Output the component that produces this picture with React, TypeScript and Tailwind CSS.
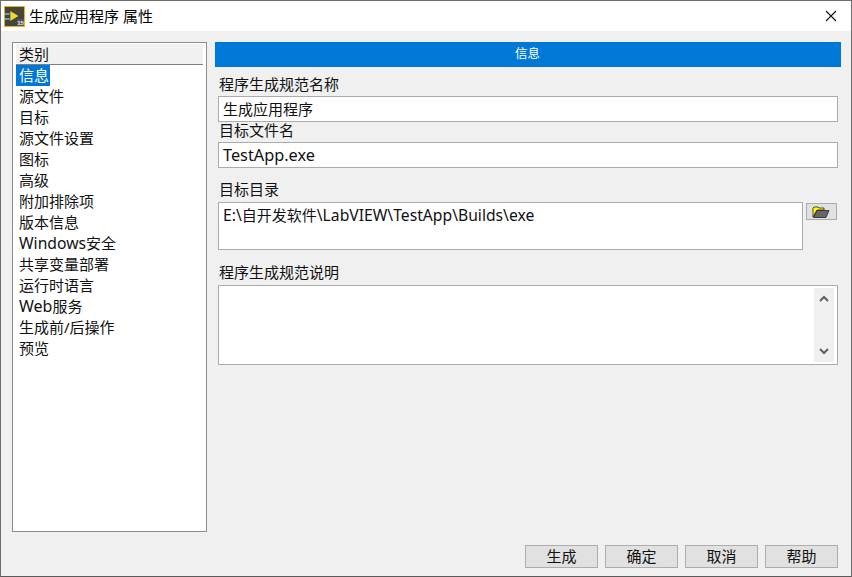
const items: React.ReactNode[] = ["源文件","目标","源文件设置","图标","高级","附加排除项","版本信息",<><span className="text-[15.7px]">Windows</span>安全</>,"共享变量部署","运行时语言",<><span className="text-[16px]">Web</span>服务</>,"生成前/后操作","预览"];

function Field({ children, className }: { children?: React.ReactNode; className: string }) {
  return <div className={"border border-[#ababab] bg-white box-border " + className}>{children}</div>;
}

export default function App() {
  return (
    <div className="w-[852px] h-[577px] box-border flex flex-col border border-[#6f6f6f] border-b-[#5a5a5a] bg-[#f0f0f0] text-[15px] text-[#111] overflow-hidden font-['Noto_Sans','Noto_Sans_CJK_SC',sans-serif]">
      <div className="h-[30px] bg-white flex items-center shrink-0">
        <svg width="21" height="21" viewBox="0 0 21 21" className="ml-[3px]">
          <rect x="0.5" y="0.5" width="20" height="20" fill="#45453c" stroke="#e8b21a" />
          <path d="M1 8h5M1 13h5" stroke="#5aa0d8" strokeWidth="2" />
          <path d="M6 4.5l9 5.5-9 5.5z" fill="#f2d82e" stroke="#222" strokeWidth="0.5" />
          <rect x="13" y="13" width="7" height="7" fill="#555" />
          <text x="13.2" y="19" fontSize="6" fontWeight="700" fill="#e8e8e8" fontFamily="Liberation Sans">15</text>
        </svg>
        <span className="ml-[4px] text-[15px] text-black leading-none">生成应用程序 属性</span>
        <svg width="12" height="12" viewBox="0 0 12 12" className="ml-auto mr-[14px]">
          <path d="M1 1l10 10M11 1L1 11" stroke="#111" strokeWidth="1.1" />
        </svg>
      </div>
      <div className="flex-1 flex items-start pl-[11px] pt-[11px] relative">
        <div className="w-[195px] h-[490px] box-border border border-[#8d8d8d] bg-white shrink-0 px-[3px] pt-px">
          <div className="h-[21px] bg-[#f1f1f1] border-b border-[#808080] pl-[3px] leading-[20px] text-[15px]">类别</div>
          <div className="h-[21px] w-[34px] bg-[#0078d7] text-white pl-[3px] leading-[21px]">信息</div>
          {items.map((t, i) => (
            <div key={i} className="h-[21px] pl-[3px] leading-[21px] whitespace-nowrap">{t}</div>
          ))}
        </div>
        <div className="ml-[8px] w-[626px] shrink-0 flex flex-col">
          <div className="h-[25px] bg-[#0078d7] text-white text-[12.5px] flex items-center justify-center pb-px pr-px">信息</div>
          <div className="pl-[3px] w-[623px] flex flex-col text-[15px]">
            <div className="h-[29px] pl-px pt-[7px] leading-[20px]">程序生成规范名称</div>
            <Field className="w-[620px] h-[26px] pl-[4px] leading-[25px]">生成应用程序</Field>
            <div className="h-[20px] pl-px leading-[17px]">目标文件名</div>
            <Field className="w-[620px] h-[26px] pl-[4px] leading-[25px]"><span className="text-[16.3px]">TestApp.exe</span></Field>
            <div className="h-[34px] pl-px pt-[12px] leading-[19px]">目标目录</div>
            <div className="flex items-start">
              <Field className="w-[585px] h-[48px] pl-[4px] pt-[1px] leading-[22px] whitespace-nowrap">
                <span className="text-[15.7px]">E:\</span>自开发软件<span className="text-[15.7px]">\LabVIEW\TestApp\Builds\exe</span>
              </Field>
              <button className="ml-[3px] mt-px w-[31px] h-[17px] box-border border border-[#ababab] bg-[#e1e1e1] flex items-center justify-center pr-[2px]">
                <svg width="18" height="12" viewBox="0 0 18 12">
                  <path d="M1 11V2l1-1h4l1 1h5v2H5L1 11z" fill="#ffff00" stroke="#222" strokeWidth="0.8" />
                  <path d="M1.5 11.5L5 4.5h12l-3 7z" fill="#666" stroke="#222" strokeWidth="0.8" />
                </svg>
              </button>
            </div>
            <div className="h-[35px] pl-px pt-[12px] leading-[21px]">程序生成规范说明</div>
            <Field className="w-[620px] h-[80px] flex justify-end p-[2px]">
              <div className="w-[20px] mr-px h-full bg-[#f0f0f0] flex flex-col justify-between items-center py-[7px]">
                <svg width="10" height="7" viewBox="0 0 10 7"><path d="M1 6l4-4 4 4" fill="none" stroke="#606060" strokeWidth="2" /></svg>
                <svg width="10" height="7" viewBox="0 0 10 7"><path d="M1 1l4 4 4-4" fill="none" stroke="#606060" strokeWidth="2" /></svg>
              </div>
            </Field>
          </div>
        </div>
        <div className="absolute right-[13px] bottom-[8px] flex gap-[7px]">
          {["生成","确定","取消","帮助"].map((t) => (
            <button key={t} className="w-[73px] h-[23px] box-border border border-[#adadad] bg-[#e1e1e1] text-[15px] leading-[20px] pb-[2px] text-center">{t}</button>
          ))}
        </div>
      </div>
    </div>
  );
}
